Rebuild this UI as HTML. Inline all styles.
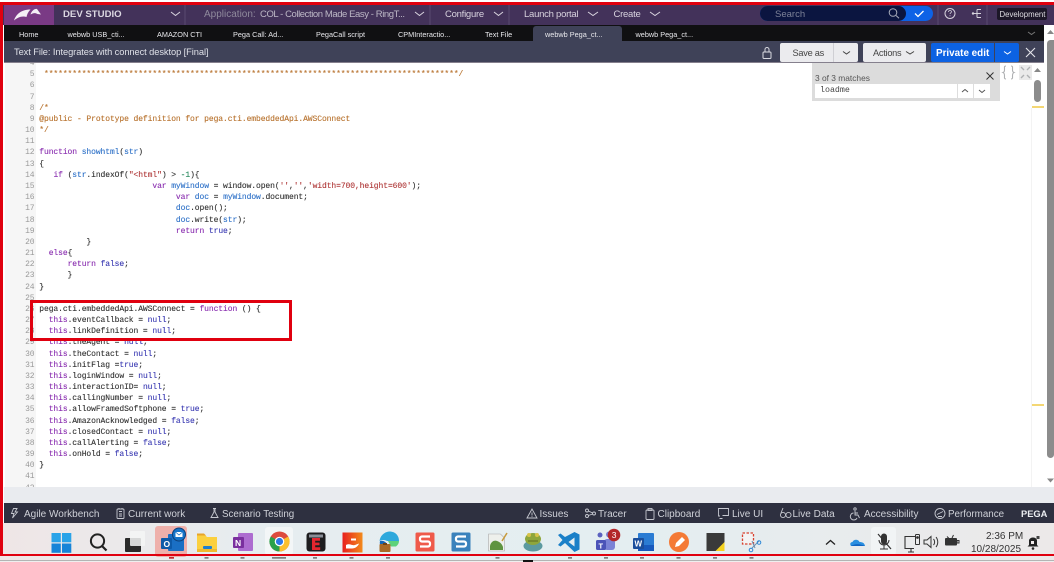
<!DOCTYPE html>
<html><head><meta charset="utf-8">
<style>
html,body{margin:0;padding:0;background:#fff}
#p{position:relative;width:1054px;height:562px;overflow:hidden;background:#fff;font-family:"Liberation Sans",sans-serif;filter:blur(.25px)}
.a,.t,.r{position:absolute}
.t{white-space:nowrap;line-height:1}
.nv{font-size:9.500px;letter-spacing:-.25px;color:#d8d3de;top:10px}
.tb{font-size:7.300px;color:#e8e8ec;top:30.500px}
.bt{font-size:10px;color:#cfd1d8;top:509.500px}
.l{position:absolute;left:39.300px;font:8px/11px "Liberation Mono",monospace;letter-spacing:-.09px;color:#333;white-space:pre;-webkit-text-stroke:.12px currentColor}
.n{position:absolute;left:5px;width:29.500px;text-align:right;font:8px/11px "Liberation Mono",monospace;letter-spacing:-.09px;color:#9a9a9a}
.k{color:#8a2fb0}.v{color:#2f72c8}.s{color:#b03a3a}.c{color:#b8732f}.b{color:#3b3bb3}.g{color:#2a8a5f}
svg{position:absolute;overflow:visible}
</style></head><body><div id="p">

<!-- top nav -->
<div class="a" style="left:0;top:4px;width:1054px;height:21px;background:#43325a"></div>
<div class="a" style="left:4px;top:4px;width:50px;height:21px;background:#7a3a85"></div>
<svg style="left:0;top:0" width="60" height="25"><path d="M14 20.500C16 14.500 21 9.500 30.500 9.500C28 12 27 14.500 26.500 17C22 15.500 17.500 17.500 14 20.500Z" fill="#f4eef5"/><path d="M30.500 14.500C31.500 11 34.500 8.500 37 9L41 14.500L37.500 14C35 12.500 33 13 30.500 14.500Z" fill="#f4eef5"/></svg>
<div class="t" style="left:63px;top:10px;font-size:9.600px;font-weight:bold;color:#dcd8e2">DEV STUDIO</div>
<svg style="left:0;top:0" width="1054" height="25" fill="none" stroke="#d9d4df" stroke-width="1">
<path d="M171 12l4.500 3.500 4.500-3.500M415 12l4.500 3.500 4.500-3.500M494 12l4.500 3.500 4.500-3.500M588 12l5 3.500 5-3.500M650 12l5 3.500 5-3.500"/>
<path d="M185 5v20M430 5v20M509 5v20" stroke="#5a4a70"/>
<path d="M938 5v20M987 5v20" stroke="#5a4a70"/>
</svg>
<div class="t nv" style="left:204px;color:#8f8a9c;font-size:10px;letter-spacing:0">Application:</div>
<div class="t nv" style="left:260px;font-size:9.500px;letter-spacing:-.42px;color:#bdb8c6">COL - Collection Made Easy - RingT...</div>
<div class="t nv" style="left:445px">Configure</div>
<div class="t nv" style="left:524px">Launch portal</div>
<div class="t nv" style="left:613.500px">Create</div>
<!-- search -->
<div class="a" style="left:760px;top:6px;width:173px;height:15px;background:#0d62e6;border-radius:8px"></div>
<div class="a" style="left:760px;top:6px;width:146px;height:15px;background:#0b1540;border-radius:8px"></div>
<div class="t" style="left:775px;top:10px;font-size:9.500px;color:#7d8297">Search</div>
<svg style="left:0;top:0" width="1054" height="25" fill="none">
<circle cx="893" cy="12.500" r="3.800" stroke="#a9adbb" stroke-width="1"/><path d="M896 15.500l3 2.800" stroke="#a9adbb"/>
<path d="M915 13.500l3 3 5.500-5.500" stroke="#fff" stroke-width="1.300"/>
<circle cx="950" cy="13.500" r="5" stroke="#d6d2dc"/><path d="M948.500 12c0-2 3-2 3-.2 0 1-1.500 1-1.500 2.200M950 15.300v1" stroke="#d6d2dc" stroke-width=".8"/>
<path d="M972 13.500h5M977 9.500v8M977 9.500h4M977 13.500h4M977 17.500h4" stroke="#d6d2dc"/><circle cx="973" cy="13.500" r="1.200" fill="#d6d2dc"/>
</svg>
<div class="a" style="left:997px;top:8px;width:50px;height:12px;background:#1c1728;border-radius:2px"></div>
<div class="t" style="left:999.500px;top:11px;font-size:7.800px;color:#dedde2">Development</div>

<!-- tabs -->
<div class="a" style="left:4px;top:25px;width:1040px;height:16px;background:#101012"></div>
<div class="a" style="left:532.500px;top:26px;width:89.500px;height:15px;background:#3f4258;border-radius:3px 3px 0 0"></div>
<div class="t tb" style="left:19px">Home</div>
<div class="t tb" style="left:67.500px">webwb USB_cti...</div>
<div class="t tb" style="left:157px">AMAZON CTI</div>
<div class="t tb" style="left:233px">Pega Call: Ad...</div>
<div class="t tb" style="left:316px">PegaCall script</div>
<div class="t tb" style="left:398px">CPMInteractio...</div>
<div class="t tb" style="left:485px">Text File</div>
<div class="t tb" style="left:545px">webwb Pega_ct...</div>
<div class="t tb" style="left:635.500px">webwb Pega_ct...</div>
<svg style="left:0;top:0" width="1054" height="41" fill="none"><path d="M1028 32l3.500 2.500 3.500-2.500" stroke="#777"/></svg>

<!-- title bar -->
<div class="a" style="left:4px;top:41px;width:1040px;height:21px;background:#3f4258;border-bottom:1px solid #85808d"></div>
<div class="t" style="left:14px;top:48px;font-size:9.300px;letter-spacing:-.08px;color:#dfe1e8">Text File: Integrates with connect desktop [Final]</div>
<svg style="left:0;top:0" width="1054" height="62" fill="none">
<rect x="763" y="52" width="8" height="6.500" rx="1" stroke="#d8d9e0"/><path d="M765 52v-2.500a2 2 0 0 1 4 0v2.500" stroke="#d8d9e0"/>
</svg>
<div class="a" style="left:780px;top:43px;width:78px;height:19px;background:#ebebee;border-radius:2px"></div>
<div class="a" style="left:833px;top:43px;width:1px;height:19px;background:#cfcfd4"></div>
<div class="t" style="left:792.500px;top:48.500px;font-size:9.200px;letter-spacing:-.25px;color:#444">Save as</div>
<div class="a" style="left:863px;top:43px;width:63px;height:19px;background:#ebebee;border-radius:2px"></div>
<div class="t" style="left:873px;top:48.500px;font-size:9.200px;letter-spacing:-.25px;color:#444">Actions</div>
<div class="a" style="left:931px;top:43px;width:62.500px;height:19px;background:#0c62e3;border-radius:2px 0 0 2px"></div>
<div class="a" style="left:994.500px;top:43px;width:24.500px;height:19px;background:#0c62e3;border-radius:0 2px 2px 0"></div>
<div class="t" style="left:936px;top:48.500px;font-size:9.900px;font-weight:bold;color:#fff">Private edit</div>
<svg style="left:0;top:0" width="1054" height="62" fill="none">
<path d="M843 51.500l3.500 2.500 3.500-2.500M906 51.500l4 2.500 4-2.500" stroke="#444"/>
<path d="M1004 51.500l3.500 2.500 3.500-2.500" stroke="#fff"/>
<path d="M1026 48l9 9M1035 48l-9 9" stroke="#e4e5ea" stroke-width="1.100"/>
</svg>

<!-- editor -->
<div class="a" style="left:5px;top:63px;width:31px;height:424px;background:#f6f6f6"></div>
<div class="a" style="left:0;top:63px;width:1030px;height:424px;overflow:hidden"><div class="a" style="left:0;top:-61.800px;width:1030px;height:500px">
<div class="n" style="top:57px">4</div>
<div class="n" style="top:68px">5</div><div class="l" style="top:68px;color:#b8732f"> ****************************************************************************************/</div>
<div class="n" style="top:79.200px">6</div>
<div class="n" style="top:90.400px">7</div>
<div class="n" style="top:101.500px">8</div><div class="l" style="top:101.500px;color:#b8732f">/*</div>
<div class="n" style="top:112.700px">9</div><div class="l" style="top:112.700px;color:#b8732f">@public - Prototype definition for pega.cti.embeddedApi.AWSConnect</div>
<div class="n" style="top:123.900px">10</div><div class="l" style="top:123.900px;color:#b8732f">*/</div>
<div class="n" style="top:135px">11</div>
<div class="n" style="top:146.200px">12</div><div class="l" style="top:146.200px"><span class="k">function</span> <span class="v">showhtml</span>(<span class="v">str</span>)</div>
<div class="n" style="top:157.400px">13</div><div class="l" style="top:157.400px">{</div>
<div class="n" style="top:168.600px">14</div><div class="l" style="top:168.600px">   <span class="k">if</span> (<span class="v">str</span>.indexOf(<span class="s">"&lt;html"</span>) &gt; <span class="g">-1</span>){</div>
<div class="n" style="top:179.700px">15</div><div class="l" style="top:179.700px">                        <span class="k">var</span> <span class="v">myWindow</span> = window.open(<span class="s">''</span>,<span class="s">''</span>,<span class="s">'width=700,height=600'</span>);</div>
<div class="n" style="top:190.900px">16</div><div class="l" style="top:190.900px">                             <span class="k">var</span> <span class="v">doc</span> = <span class="v">myWindow</span>.document;</div>
<div class="n" style="top:202.100px">17</div><div class="l" style="top:202.100px">                             <span class="v">doc</span>.open();</div>
<div class="n" style="top:213.300px">18</div><div class="l" style="top:213.300px">                             <span class="v">doc</span>.write(<span class="v">str</span>);</div>
<div class="n" style="top:224.400px">19</div><div class="l" style="top:224.400px">                             <span class="k">return</span> <span class="b">true</span>;</div>
<div class="n" style="top:235.600px">20</div><div class="l" style="top:235.600px">          }</div>
<div class="n" style="top:246.800px">21</div><div class="l" style="top:246.800px">  <span class="k">else</span>{</div>
<div class="n" style="top:258px">22</div><div class="l" style="top:258px">      <span class="k">return</span> <span class="b">false</span>;</div>
<div class="n" style="top:269.100px">23</div><div class="l" style="top:269.100px">      }</div>
<div class="n" style="top:280.300px">24</div><div class="l" style="top:280.300px">}</div>
<div class="n" style="top:291.500px">25</div>
<div class="n" style="top:302.600px">26</div><div class="l" style="top:302.600px">pega.cti.embeddedApi.AWSConnect = <span class="k">function</span> () {</div>
<div class="n" style="top:313.800px">27</div><div class="l" style="top:313.800px">  <span class="k">this</span>.eventCallback = <span class="b">null</span>;</div>
<div class="n" style="top:325px">28</div><div class="l" style="top:325px">  <span class="k">this</span>.linkDefinition = <span class="b">null</span>;</div>
<div class="n" style="top:336.200px">29</div><div class="l" style="top:336.200px">  <span class="k">this</span>.theAgent = <span class="b">null</span>;</div>
<div class="n" style="top:347.300px">30</div><div class="l" style="top:347.300px">  <span class="k">this</span>.theContact = <span class="b">null</span>;</div>
<div class="n" style="top:358.500px">31</div><div class="l" style="top:358.500px">  <span class="k">this</span>.initFlag =<span class="b">true</span>;</div>
<div class="n" style="top:369.700px">32</div><div class="l" style="top:369.700px">  <span class="k">this</span>.loginWindow = <span class="b">null</span>;</div>
<div class="n" style="top:380.900px">33</div><div class="l" style="top:380.900px">  <span class="k">this</span>.interactionID= <span class="b">null</span>;</div>
<div class="n" style="top:392px">34</div><div class="l" style="top:392px">  <span class="k">this</span>.callingNumber = <span class="b">null</span>;</div>
<div class="n" style="top:403.200px">35</div><div class="l" style="top:403.200px">  <span class="k">this</span>.allowFramedSoftphone = <span class="b">true</span>;</div>
<div class="n" style="top:414.400px">36</div><div class="l" style="top:414.400px">  <span class="k">this</span>.AmazonAcknowledged = <span class="b">false</span>;</div>
<div class="n" style="top:425.500px">37</div><div class="l" style="top:425.500px">  <span class="k">this</span>.closedContact = <span class="b">null</span>;</div>
<div class="n" style="top:436.700px">38</div><div class="l" style="top:436.700px">  <span class="k">this</span>.callAlerting = <span class="b">false</span>;</div>
<div class="n" style="top:447.900px">39</div><div class="l" style="top:447.900px">  <span class="k">this</span>.onHold = <span class="b">false</span>;</div>
<div class="n" style="top:459.100px">40</div><div class="l" style="top:459.100px">}</div>
<div class="n" style="top:470.200px">41</div>
<div class="n" style="top:481.400px">42</div>
</div></div>

<!-- highlight box -->
<div class="a" style="left:30px;top:300px;width:256px;height:35px;border:3px solid #e0000f"></div>

<!-- find box -->
<div class="a" style="left:812px;top:63px;width:188px;height:38px;background:#dcdcdc"></div>
<div class="t" style="left:815px;top:73.500px;font-size:8.400px;color:#555">3 of 3 matches</div>
<div class="a" style="left:814.500px;top:84px;width:175.500px;height:14px;background:#fff"></div>
<div class="a" style="left:956.500px;top:84px;width:1px;height:14px;background:#ddd"></div>
<div class="a" style="left:973px;top:84px;width:1px;height:14px;background:#ddd"></div>
<div class="t" style="left:820px;top:87px;font:8.300px/1 'Liberation Mono',monospace;color:#444">loadme</div>
<svg style="left:0;top:0" width="1054" height="110" fill="none">
<path d="M986.500 72.500l7 7M993.500 72.500l-7 7" stroke="#333" stroke-width="1"/>
<path d="M962 92l3-2.500 3 2.500M979 90l3 2.500 3-2.500" stroke="#555"/>
<path d="M1006 66c-2 0-1.500 1-1.500 3s0 3-1.500 3.500c1.500.5 1.500 2 1.500 3.500s-.5 3 1.500 3M1011 66c2 0 1.500 1 1.500 3s0 3 1.500 3.500c-1.500.5-1.500 2-1.500 3.500s.5 3-1.500 3" stroke="#aeb0b2" stroke-width="1.100"/>
<rect x="1019" y="65" width="13" height="15" fill="#eaeaea"/>
<path d="M1021 67l3 3M1030 67l-3 3M1021 78l3-3M1030 78l-3-3" stroke="#aeb0b2" stroke-width="1.400"/>
<path d="M1034 72l3.500-4 3.500 4z" fill="#888"/>
</svg>
<div class="a" style="left:1034px;top:80px;width:7px;height:22px;background:#8c8c8c;border-radius:4px"></div>
<div class="a" style="left:1032px;top:105.500px;width:12px;height:2.500px;background:#f4d774"></div>
<div class="a" style="left:1032px;top:403.500px;width:12px;height:2px;background:#f4d774"></div>
<div class="a" style="left:1031px;top:108px;width:1px;height:379px;background:#f3f3f3"></div>

<!-- outer scrollbar -->
<div class="a" style="left:1044px;top:25px;width:10px;height:462px;background:#fff"></div>
<div class="a" style="left:1047px;top:40px;width:7px;height:418px;background:#8c8c8c;border-radius:4px 0 4px 4px"></div>
<svg style="left:0;top:0" width="1054" height="500"><path d="M1047 34l3.500-4 3.500 4zM1047 478.500h7l-3.500 4z" fill="#888"/></svg>

<!-- bottom area -->
<div class="a" style="left:4px;top:487px;width:1050px;height:16px;background:#e9ebef"></div>
<div class="a" style="left:4px;top:503px;width:1050px;height:19.500px;background:#2e3040"></div>
<svg style="left:0;top:0" width="1054" height="522" fill="none" stroke="#c6c8d0" stroke-width=".9">
<path d="M17 508.500h-3.500l-2 5h2.500l-1.500 4.500 5-6h-2.500z"/>
<rect x="117" y="509" width="7" height="9.500" rx="1"/><path d="M119 511.500h3M119 514h3M119 516h3M119 508v1.500M122 508v1.500"/>
<path d="M213 508.500h3M214 508.500v3.500l-3 5.500h7l-3-5.500v-3.500"/>
<path d="M527 518l5-9 5 9zM532 512.500v3M532 516.300v.7"/>
<circle cx="587" cy="510.500" r="1.500"/><circle cx="587" cy="516" r="1.500"/><circle cx="594" cy="513.500" r="1.500"/><path d="M588.500 511l4 2M588.500 515.500l4-1.500"/>
<rect x="646" y="510" width="8" height="9.500" rx="1"/><rect x="648" y="508.500" width="4" height="2"/>
<path d="M720 516h-1.500v-7.500h10v7h-6M719.500 518.500h3"/>
<circle cx="783" cy="515" r="2.600"/><circle cx="788.500" cy="515" r="2.600"/><path d="M785.500 515h.5M781 513l2-5"/>
<circle cx="855" cy="509" r="1.200"/><path d="M855 511v4h3l1.500 3M855 513h3M853.500 513a3.500 3.500 0 1 0 3.500 5"/>
<circle cx="940" cy="513.500" r="5"/><path d="M937 514.500l6-3M938 516.500h4"/>
</svg>
<div class="t bt" style="left:24px">Agile Workbench</div>
<div class="t bt" style="left:128px">Current work</div>
<div class="t bt" style="left:222px;font-size:9.800px">Scenario Testing</div>
<div class="t bt" style="left:539.500px">Issues</div>
<div class="t bt" style="left:598px">Tracer</div>
<div class="t bt" style="left:657.500px">Clipboard</div>
<div class="t bt" style="left:732px">Live UI</div>
<div class="t bt" style="left:792.500px">Live Data</div>
<div class="t bt" style="left:864px">Accessibility</div>
<div class="t bt" style="left:948px;font-size:9.800px">Performance</div>
<div class="t bt" style="left:1021px;font-weight:bold;font-size:9.300px;top:510px;color:#eceef2">PEGA</div>

<!-- taskbar -->
<div class="a" style="left:0;top:522.500px;width:1054px;height:40px;background:linear-gradient(90deg,#efe6e6 0,#e6edf0 25%,#e4eef1 60%,#ece9e9 100%)"></div>
<div class="a" style="left:155px;top:526px;width:32px;height:31px;background:#eeb0ab;border-radius:3px"></div>
<div class="a" style="left:265px;top:527px;width:28px;height:28px;background:#f3f6f7;border-radius:3px"></div>
<div class="a" style="left:871px;top:527px;width:25px;height:28px;background:#f1f4f5;border-radius:3px"></div>
<svg style="left:0;top:0" width="1054" height="562">
<defs><linearGradient id="rg" x1="0" x2="1" y1="0" y2="0"><stop offset="0" stop-color="#e8201e"/><stop offset="1" stop-color="#f28a1c"/></linearGradient></defs>
<!-- windows -->
<g fill="#29a3e8"><rect x="51.500" y="533" width="9.300" height="9.300"/><rect x="62" y="533" width="9.300" height="9.300"/><rect x="51.500" y="543.500" width="9.300" height="9.300" fill="#1684d8"/><rect x="62" y="543.500" width="9.300" height="9.300" fill="#1684d8"/></g>
<!-- search -->
<circle cx="97.500" cy="541" r="6.600" fill="none" stroke="#222" stroke-width="2"/><path d="M102 546l4.500 4.500" stroke="#222" stroke-width="2.200"/>
<!-- task view -->
<rect x="125" y="538" width="16" height="14" rx="1" fill="#2a2a2a"/><rect x="130" y="531" width="15" height="15" rx="1" fill="#f5f6f6" opacity=".85"/>
<!-- outlook -->
<rect x="168" y="534" width="16" height="17" rx="1" fill="#1a6fc4"/><rect x="161" y="538" width="11" height="11" rx="1" fill="#0e5aa8"/><text x="163.500" y="547" font-size="8.500" font-weight="bold" fill="#fff" font-family="Liberation Sans">O</text>
<circle cx="179" cy="534.500" r="6.500" fill="#1573c8" stroke="#0d3f78"/><rect x="175.500" y="532" width="7" height="5" fill="#fff"/><path d="M175.500 532l3.500 3 3.500-3" fill="none" stroke="#1573c8" stroke-width=".7"/>
<!-- folder -->
<path d="M197 535h8l2 2h10v15h-20z" fill="#fbd03f"/><path d="M197 533.500h7l2 2h-9z" fill="#e7a42b"/><rect x="203" y="546" width="9" height="3" rx="1" fill="#1c7fd0"/><rect x="197" y="549" width="20" height="3" fill="#f0b92f"/>
<!-- onenote -->
<rect x="238" y="533" width="15" height="18" rx="1" fill="#ad6cd0"/><rect x="233" y="537" width="11" height="11" rx="1" fill="#7a2f9e"/><text x="235" y="546" font-size="8.500" font-weight="bold" fill="#fff" font-family="Liberation Sans">N</text>
<!-- chrome -->
<circle cx="279.500" cy="541.500" r="10" fill="#dd4b3e"/><path d="M279.500 541.500L270.800 536.500A10 10 0 0 0 279.500 551.500z" fill="#2ba14b"/><path d="M279.500 541.500V551.500A10 10 0 0 0 288.200 536.500z" fill="#fbc02d"/><circle cx="279.500" cy="541.500" r="4.800" fill="#fff"/><circle cx="279.500" cy="541.500" r="3.600" fill="#2e79e6"/>
<!-- E -->
<rect x="306.500" y="532.500" width="19" height="19" rx="3" fill="#1d1d1f"/><rect x="309" y="534.500" width="14" height="3" fill="#8a8f98"/><path d="M312 538h8v2.800h-4.800v1.800h4.300v2.600h-4.300v2h5v2.800h-8.200z" fill="#e3262f"/>
<!-- red hand -->
<rect x="342.500" y="532.500" width="20" height="20" fill="url(#rg)"/><path d="M346 545c4-2 6 1 9 0l4-1.500c-1 3-4 5-7 5h-6zM351 538.500h5v2h-5z" fill="#fff"/>
<!-- edge -->
<path d="M379.500 541c1-7 7-10 11-9.500 5 .5 8.500 4 8.500 9.500h-12c-3-1.500-6-1-7.500 0z" fill="#2ea8dc"/><path d="M399 541c0 2-1 4-3 5.500h-5l-3-5.500z" fill="#5ed27b"/><path d="M380 541c-1 5 2 10 7 11v-8c-1-2-4-4-7-3z" fill="#1366b8"/><rect x="379.500" y="544" width="11" height="8" rx="1" fill="#a96a26"/><rect x="383" y="543" width="4" height="2" fill="#6e4416"/>
<!-- S red -->
<rect x="415.500" y="532.500" width="19" height="19" rx="1.500" fill="#ef5a4a"/><path d="M430 536.500h-8a2 2 0 0 0-2 2v1a2 2 0 0 0 2 2h6a2 2 0 0 1 2 2v1a2 2 0 0 1-2 2h-8" fill="none" stroke="#fff" stroke-width="2.200"/>
<!-- S blue -->
<rect x="451.500" y="532.500" width="19" height="19" rx="1.500" fill="#3a82bc"/><path d="M466 536.500h-8a2 2 0 0 0-2 2v1a2 2 0 0 0 2 2h6a2 2 0 0 1 2 2v1a2 2 0 0 1-2 2h-8" fill="none" stroke="#fff" stroke-width="2.200"/>
<!-- notepad -->
<path d="M488.500 534h12l4 4v13h-16z" fill="#eef0ec" stroke="#aaa" stroke-width=".6"/><path d="M490 546c1-5 5-6 7-5 3 1 5 3 6 6v3h-13z" fill="#5f9440"/><path d="M502 541l5-8" stroke="#c79a3b" stroke-width="1.500"/>
<!-- toad -->
<ellipse cx="533" cy="546" rx="9.500" ry="5.500" fill="#5c9aa0"/><ellipse cx="533" cy="539" rx="8" ry="6" fill="#8ea63c"/><circle cx="529" cy="535" r="2" fill="#d8c34a"/><circle cx="537" cy="535" r="2" fill="#d8c34a"/><path d="M528 541h10" stroke="#5d6b22"/>
<!-- vscode -->
<path d="M574.500 532l5 2.500v15l-5 2.500-9.500-9-4.500 3.500-2.500-1.500 4.500-5-4.500-5 2.500-1.500 4.500 3.500zM574.500 537.500l-6 4.500 6 4.500z" fill="#1a80c8" fill-rule="evenodd"/>
<!-- teams -->
<circle cx="609" cy="534.500" r="3" fill="#7b83d6"/><rect x="604" y="539" width="11" height="11" rx="3" fill="#7b83d6"/><circle cx="600" cy="535" r="2.500" fill="#5b62c0"/><rect x="596" y="540" width="10" height="10" rx="1.500" fill="#4b53b8"/><text x="598.500" y="548.500" font-size="7.500" font-weight="bold" fill="#fff" font-family="Liberation Sans">T</text>
<circle cx="614" cy="535" r="6.300" fill="#b3272a"/><text x="611.700" y="538" font-size="8.500" fill="#fff" font-family="Liberation Sans">3</text>
<!-- word -->
<rect x="638" y="533" width="16" height="18" rx="1" fill="#2b7cd3"/><rect x="638" y="545" width="16" height="6" fill="#185abd"/><rect x="633" y="538" width="11" height="11" rx="1" fill="#1b4f9c"/><text x="634.500" y="546.700" font-size="8" font-weight="bold" fill="#fff" font-family="Liberation Sans">W</text>
<!-- orange -->
<circle cx="679" cy="542" r="10" fill="#f47a36"/><path d="M675 547l1-4 6-6 3 3-6 6z" fill="#fff"/>
<!-- sticky -->
<rect x="706.500" y="533" width="18" height="18" fill="#3a3a3a"/><path d="M724.500 542v9h-9z" fill="#f4d21f"/>
<!-- snip -->
<rect x="742.500" y="533" width="11" height="11" fill="#f3f3f3" stroke="#d8412f" stroke-width="1.300" stroke-dasharray="2.500 1.500"/><path d="M752 541l3 7M759 541l-7 7" stroke="#6a8fb0" stroke-width="1"/><circle cx="751" cy="550" r="1.800" fill="none" stroke="#2a86d6"/><circle cx="759" cy="542.500" r="1.800" fill="none" stroke="#2a86d6"/>
<!-- tray -->
<path d="M826 544.500l4.500-4 4.500 4" fill="none" stroke="#222" stroke-width="1.300"/>
<path d="M851 546c-1.500-2-.5-4 1.500-4 1-3 6-3 7 0 3 0 5 1 5.500 4z" fill="#2a8fe0"/><path d="M851 546c3-2 8-3 14 0z" fill="#1165c2"/>
<g fill="none" stroke="#333"><rect x="881.500" y="534" width="5" height="10" rx="2.500" fill="#333"/><path d="M879 540a5 5 0 0 0 10 0M884 545.500v3M880 549h8"/><path d="M878 534l13 15" stroke-width="1.200"/>
<path d="M914 548.500h-9v-12h10M908 552h6M911 548.500v3" stroke-width="1.100"/><rect x="915.500" y="534.500" width="4" height="10" rx=".8"/><circle cx="917.500" cy="537.500" r=".9" fill="#333"/>
<path d="M924 540v4h3l4 3.500v-11l-4 3.500zM933.500 539a4.500 4.500 0 0 1 0 6M936 537a8 8 0 0 1 0 10"/></g>
<rect x="945" y="538" width="12" height="7.500" rx="1" fill="#333"/><path d="M957 540.500h2v2.500h-2zM947 536.500l2 2M952 538l1.500-3" stroke="#333" fill="none"/>
<path d="M1029 545v-5a4.500 4.500 0 0 1 8 0v5l1.500 1.500h-11z" fill="#222"/><circle cx="1033" cy="548.500" r="1.300" fill="#222"/><path d="M1031 541h3v3h-3z" fill="#f2ecec"/><rect x="1036.500" y="536" width="3" height="3" fill="#444"/>
<!-- running dots -->
<g fill="#7d7d7d"><rect x="204.500" y="557" width="4" height="1.700"/><rect x="240.500" y="557" width="4" height="1.700"/><rect x="272" y="557" width="14" height="1.700"/><rect x="313" y="557" width="4" height="1.700"/><rect x="349.500" y="557" width="4" height="1.700"/><rect x="386" y="557" width="4" height="1.700"/><rect x="495.500" y="557" width="4" height="1.700"/><rect x="568" y="557" width="4" height="1.700"/><rect x="604" y="557" width="4" height="1.700"/><rect x="640" y="557" width="4" height="1.700"/><rect x="676.500" y="557" width="4" height="1.700"/><rect x="713" y="557" width="4" height="1.700"/><rect x="749.500" y="557" width="4" height="1.700"/></g>
<rect x="169" y="557" width="5" height="1.700" fill="#c4262e"/>
<rect x="0" y="560" width="1054" height="1" fill="#b4b4b4"/>
<rect x="0" y="561" width="1054" height="1" fill="#efefef"/>
<rect x="523" y="560" width="10" height="2" fill="#111"/>
<rect x="0" y="227" width="1" height="12" fill="#111"/>
</svg>
<div class="t" style="left:986px;top:531.500px;font-size:10px;color:#333">2:36 PM</div>
<div class="t" style="left:971px;top:544.500px;font-size:10px;color:#333">10/28/2025</div>

<!-- outer red frame -->
<div class="a" style="left:0;top:2px;width:1054px;height:2.500px;background:#e0000f"></div>
<div class="a" style="left:0;top:2px;width:3px;height:554px;background:#e0000f"></div>
<div class="a" style="left:1px;top:554px;width:1053px;height:2px;background:#e0000f"></div>
</div></body></html>
